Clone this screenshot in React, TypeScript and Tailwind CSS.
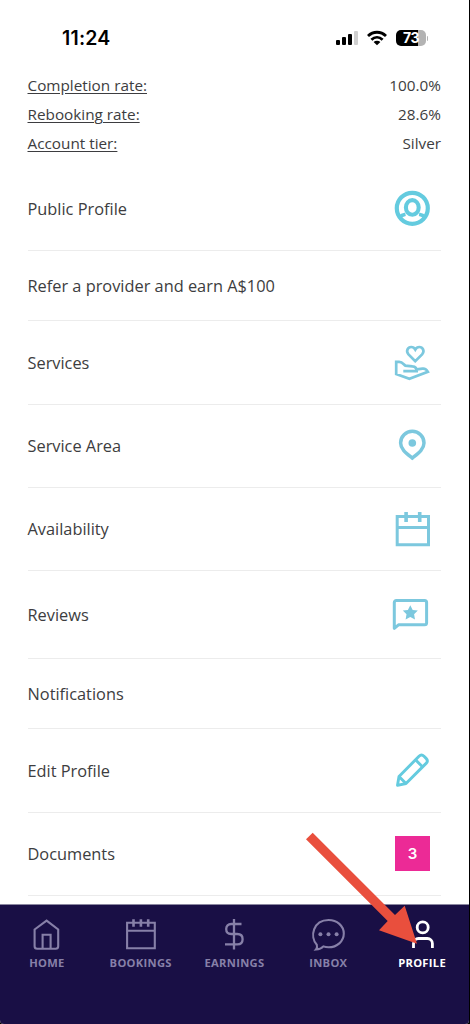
import React from 'react';

const HEADER_STATS = [
  { label: 'Completion rate:', value: '100.0%' },
  { label: 'Rebooking rate:', value: '28.6%' },
  { label: 'Account tier:', value: 'Silver' },
];

const PublicProfileIcon = () => (
  <svg className="h-[37px] w-9 overflow-visible" viewBox="0 0 36 37" fill="none" stroke="#64cbdf">
    <circle cx="18.3" cy="18.3" r="15.5" strokeWidth="4.2" />
    <ellipse cx="18.3" cy="17.4" rx="6.4" ry="7.3" strokeWidth="4.1" />
    <path d="M5.500 27.500c1.500-1.800 3.500-2.800 6-3.200M31.100 27.500c-1.500-1.800-3.500-2.800-6-3.200" strokeWidth="3.6" />
  </svg>
);

const ServicesIcon = () => (
  <svg className="h-[37px] w-9 overflow-visible" viewBox="0 0 36 37" fill="none" stroke="#7cc8de" strokeWidth="2.7">
    <path d="M21.3 17.2 14.500 10.400C11.500 6.800 14 3 17.200 3c2 0 3.300 1 4.100 2.500C22.100 4 23.400 3 25.400 3c3.200 0 5.700 3.800 2.700 7.400Z" />
    <path d="M9.300 27.100h13.400c0-3-1.400-4.600-4.200-4.800l-7.300-.7c-2-1.800-3.200-3.700-6-3.700H2.200v12.200l13.200 4.700 18.500-7c-1.500-2.600-3.200-3.400-5.400-3.100l-5.800.7" />
  </svg>
);

const ServiceAreaIcon = () => (
  <svg className="h-9 w-9 overflow-visible" viewBox="0 0 36 36" fill="none" stroke="#7cc8de" strokeWidth="3.5">
    <path d="M18.300 30.100C13 25.800 6.600 21.500 6.600 15a11.700 11.700 0 0 1 23.400 0c0 6.500-6.400 10.800-11.700 15.100Z" />
    <circle cx="18.300" cy="15" r="3.800" fill="#7cc8de" stroke="none" />
  </svg>
);

const AvailabilityIcon = () => (
  <svg className="h-9 w-9 overflow-visible" viewBox="0 0 36 36" fill="none" stroke="#7cc8de" strokeWidth="3">
    <path d="M3.200 5.500h31.300v28.300H3.200ZM3.200 16.500h31.300" />
    <path d="M12.100 1v10M25.700 1v10" strokeWidth="3.6" />
  </svg>
);

const ReviewsIcon = () => (
  <svg className="h-[37px] w-9 overflow-visible" viewBox="0 0 36 37" fill="none" stroke="#7cc8de" strokeWidth="3" strokeLinejoin="round">
    <path d="M.3 32.300V6.500a2 2 0 0 1 2-2h28.300a2 2 0 0 1 2 2v20.300a2 2 0 0 1-2 2H4.500Z" />
    <path d="m16.300 9.200 2.400 4.700 5.100.7-3.700 3.600.9 5.200-4.700-2.500-4.700 2.500.9-5.200-3.700-3.600 5.100-.7Z" fill="#7cc8de" stroke="none" />
  </svg>
);

const EditIcon = () => (
  <svg className="h-[37px] w-9 overflow-visible" viewBox="0 0 36 37" fill="none" stroke="#64cbdf" strokeWidth="2.9" strokeLinejoin="round">
    <path d="M3.500 33.300 5 24.400 25 4.300c1.600-1.600 3.400-1.600 5 0l2.100 2.100c1.600 1.600 1.600 3.400 0 5L12 31.500Z" />
    <path d="m21.500 7.800 7.200 7.200M5 24.400l7 7.100" />
  </svg>
);

const CountBadge: React.FC<{ count: number }> = ({ count }) => (
  <span className="mb-px flex h-[35px] w-[35px] items-center justify-center bg-[#ec2a96] text-[15px] font-semibold text-white font-['Inter',sans-serif]">
    {count}
  </span>
);

const MENU = [
  { title: 'Public Profile', height: 'h-[84px]', icon: <PublicProfileIcon /> },
  { title: 'Refer a provider and earn A$100', height: 'h-[70px]' },
  { title: 'Services', height: 'h-[84px]', icon: <ServicesIcon /> },
  { title: 'Service Area', height: 'h-[83px]', icon: <ServiceAreaIcon /> },
  { title: 'Availability', height: 'h-[83px]', icon: <AvailabilityIcon /> },
  { title: 'Reviews', height: 'h-[88px]', icon: <ReviewsIcon /> },
  { title: 'Notifications', height: 'h-[70px]' },
  { title: 'Edit Profile', height: 'h-[84px]', icon: <EditIcon /> },
  { title: 'Documents', height: 'h-[83px]', icon: <CountBadge count={3} /> },
];

const TABS = [
  {
    label: 'Home',
    icon: <path d="M5.600 11.500 17.600 2.600l11.600 8.900v16.700a2.500 2.500 0 0 1-2.500 2.500H8.100a2.500 2.500 0 0 1-2.500-2.500ZM13.600 30.700V16.700h8v14" />,
  },
  {
    label: 'Bookings',
    icon: (
      <>
        <path d="M4.100 4.700h27.700v25.600H4.100ZM4.100 12.700h27.700" />
        <path d="M10.500 1.300v7.400M17.900 1.300v7.400M25.200 1.300v7.400" strokeWidth="2.6" />
      </>
    ),
  },
  {
    label: 'Earnings',
    icon: <path d="M18 1v30.500M25.500 6H15.200c-3 0-5 2-5 5s2 5 5 5h6c3.200 0 5.400 2 5.400 5.200s-2.200 5.200-5.400 5.200H9" strokeWidth="2.3" />,
  },
  {
    label: 'Inbox',
    icon: (
      <>
        <path d="M6 31.500c1.500-1.600 1.300-3 .8-4.700C-.5 19 3 2 18.600 2c8.400 0 15.200 5.800 15.200 13.600S27 29.300 18.600 29.300c-2 0-3.500-.2-5.200-.9-1.800 2-4.400 3-7.400 3.100Z" />
        <g fill="currentColor" stroke="none">
          <circle cx="10.400" cy="16.300" r="2" />
          <circle cx="18.500" cy="16.300" r="2" />
          <circle cx="26.600" cy="16.300" r="2" />
        </g>
      </>
    ),
  },
  {
    label: 'Profile',
    active: true,
    icon: (
      <g strokeWidth="2.8">
        <circle cx="18.700" cy="9.400" r="5.500" />
        <path d="M9.500 30v-4.500a5 5 0 0 1 5-5h8.900a5 5 0 0 1 5 5V30" />
      </g>
    ),
  },
];

const StatusBar = () => (
  <div className="flex h-[71px] items-start justify-between pr-[41px] pl-[62px] pt-[30px]">
    <span className="text-[19.5px] leading-[17px] font-semibold tracking-[0.2px] text-black font-['Inter',sans-serif]">11:24</span>
    <div className="flex items-center">
      <svg className="h-4 w-6" viewBox="0 0 24 16">
        <rect x="1" y="10" width="4" height="5" rx="1" />
        <rect x="7" y="7" width="4" height="8" rx="1" />
        <rect x="13" y="4" width="4" height="11" rx="1" />
        <rect x="19" y="1" width="4" height="14" rx="1" fill="#cfcfcf" />
      </svg>
      <svg className="ml-[8px] h-4 w-5" viewBox="0 0 20 16" fill="none" stroke="#000" strokeWidth="2.8">
        <path d="M1 6c5.200-5 12.800-5 18 0M4.400 9.700c3.300-3.100 7.900-3.100 11.200 0" />
        <path d="M10 15.200 6.600 12c1.900-1.600 4.900-1.600 6.800 0Z" fill="#000" stroke="none" />
      </svg>
      <div className="ml-[9px] flex h-4 w-[30px] items-center justify-center rounded-[5px] bg-linear-to-r from-black from-75% to-[#b3b3b3] to-75% text-[14px] leading-4 font-bold tracking-tight text-white font-['Inter',sans-serif]">
        73
      </div>
      <div className="ml-px h-[5px] w-px rounded-r-full bg-[#b3b3b3]" />
    </div>
  </div>
);

export default function App() {
  return (
    <div className="h-[1024px] w-[470px] overflow-hidden bg-black">
      <div className="relative flex h-full w-[469px] flex-col overflow-hidden rounded-b-[4px] bg-white text-[#3d3d40] font-['Open_Sans',sans-serif]">
        <StatusBar />

        <main className="h-[833px] pr-[28px] pl-[27.500px]">
          <dl className="mb-[9px]">
            {HEADER_STATS.map((stat) => (
              <div key={stat.label} className="flex h-[29px] items-center justify-between text-[15.3px]">
                <dt className="underline underline-offset-2">{stat.label}</dt>
                <dd>{stat.value}</dd>
              </div>
            ))}
          </dl>

          {MENU.map((item) => (
            <div key={item.title} className={`flex items-center justify-between border-b border-[#ececec] pr-[11px] text-[16.35px] leading-6 ${item.height}`}>
              <span>{item.title}</span>
              {item.icon}
            </div>
          ))}
        </main>

        <nav className="flex flex-1 border-t border-[#8b87a0] bg-[#190f45] pt-[13px]">
          {TABS.map((tab) => (
            <div key={tab.label} className={`flex flex-1 flex-col items-center ${tab.active ? 'text-white' : 'text-[#8780a8]'}`}>
              <svg className="h-8 w-9 overflow-visible" viewBox="0 0 36 32" fill="none" stroke="currentColor" strokeWidth="2.1">
                {tab.icon}
              </svg>
              <span className="mt-[5px] text-[11.2px] leading-4 font-bold tracking-[0.3px] uppercase">{tab.label}</span>
            </div>
          ))}
        </nav>

        {/* arrow pointing at the profile tab */}
        <svg className="absolute top-[830px] left-[300px] h-[120px] w-[120px]" viewBox="300 830 120 120">
          <path d="M312.700 832.700 306 839.300 387.700 921 379 930.300 417 943.700 404.700 905.700 395 915Z" fill="#e94f3d" />
        </svg>
      </div>
    </div>
  );
}
